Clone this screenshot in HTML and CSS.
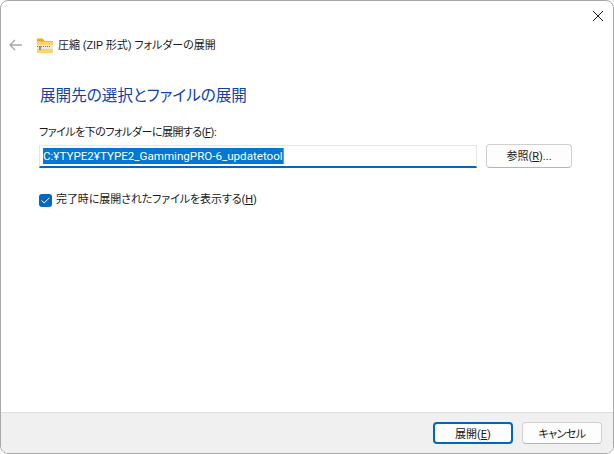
FILE: index.html
```html
<!DOCTYPE html>
<html lang="ja">
<head>
    <meta charset="UTF-8">
    <meta name="viewport" content="width=device-width, initial-scale=1.0">
    <title>圧縮 (ZIP 形式) フォルダーの展開</title>
    <link rel="stylesheet" href="styles.css">
</head>
<body>
    <div class="window">
        <div class="title-bar">
            <svg class="close-icon" width="10" height="10" viewBox="0 0 10 10">
                <path d="M0 0L10 10M10 0L0 10" stroke="#1a1a1a" stroke-width="1" fill="none"/>
            </svg>
        </div>
        <div class="nav-row">
            <svg class="back-icon" width="13" height="12" viewBox="0 0 13 12">
                <path d="M6 1L1 6L6 11M1 6H13" stroke="#a6a6a6" stroke-width="1.3" fill="none"/>
            </svg>
            <svg class="folder-icon" width="16" height="15" viewBox="0 0 16 15">
                <path d="M0 1.5a1 1 0 0 1 1-1h4.500l2 2v2H0z" fill="#f0a818"/>
                <rect x="0" y="3" width="16" height="12" rx="1" fill="#fcd46a"/>
                <rect x="0" y="3" width="16" height="1" fill="#f5bd3e"/>
                <rect x="0" y="7" width="16" height="4" fill="#ece7d6"/>
                <path d="M0 8.500H13" stroke="#77776a" stroke-width="1" stroke-dasharray="1 1"/>
                <path d="M3 8V12" stroke="#77776a" stroke-width="1.500"/>
            </svg>
            <span class="nav-title">圧縮 (ZIP 形式) フォルダーの展開</span>
        </div>
        <div class="content">
            <h1 class="heading">展開先の選択とファイルの展開</h1>
            <div class="field-label">ファイルを下のフォルダーに展開する(<u>F</u>):</div>
            <div class="field-row">
                <div class="path-input"><span class="selected">C:¥TYPE2¥TYPE2_GammingPRO-6_updatetool</span></div>
                <button class="btn browse-btn">参照(<u>R</u>)...</button>
            </div>
            <div class="check-row">
                <span class="checkbox">
                    <svg width="9" height="7" viewBox="0 0 9 7">
                        <path d="M0.500 3.500L3.200 6L8.500 0.700" stroke="#fff" stroke-width="1" fill="none"/>
                    </svg>
                </span>
                <span class="check-label">完了時に展開されたファイルを表示する(<u>H</u>)</span>
            </div>
        </div>
        <div class="footer">
            <button class="btn footer-btn primary">展開(<u>E</u>)</button>
            <button class="btn footer-btn cancel">キャンセル</button>
        </div>
    </div>
</body>
</html>
```

FILE: styles.css
```css
html, body {
    margin: 0;
    height: 100%;
    background-color: #fff;
}
body {
    font-family: Roboto, "Noto Sans CJK JP", sans-serif;
    font-size: 11px;
    font-feature-settings: "palt";
    color: #1a1a1a;
    overflow: hidden;
}
.window {
    width: 614px;
    height: 454px;
    box-sizing: border-box;
    display: flex;
    flex-direction: column;
    background: #fff;
    border: 1px solid #a9a9a9;
    border-radius: 8px;
    overflow: hidden;
}
.title-bar {
    height: 29px;
    flex: none;
    display: flex;
    justify-content: flex-end;
    align-items: flex-end;
    padding-right: 10px;
    box-sizing: border-box;
}
.close-icon {
    margin-bottom: 9px;
}
.nav-row {
    height: 30px;
    flex: none;
    display: flex;
    align-items: center;
    padding-left: 8px;
    box-sizing: border-box;
}
.folder-icon {
    margin-left: 15px;
}
.nav-title {
    margin-left: 5px;
    padding-top: 2px;
    line-height: 30px;
}
.content {
    flex: 1;
    padding: 0 0 0 38px;
}
.heading {
    margin: 24px 0 0 1px;
    font-size: 15.6px;
    font-weight: 400;
    line-height: 24px;
    color: #0f3fa8;
}
.field-label {
    margin-top: 16px;
    line-height: 18px;
    letter-spacing: -0.5px;
}
.field-row {
    display: flex;
    margin-top: 3px;
}
.path-input {
    width: 438px;
    height: 23px;
    box-sizing: border-box;
    padding: 2px 0 0 3px;
    border: 1px solid #e5e5e5;
    border-bottom: 2px solid #0067c0;
    font-size: 11.6px;
    line-height: 16px;
}
.selected {
    display: inline-block;
    height: 16px;
    background-color: #0078d4;
    color: #fff;
    white-space: nowrap;
    border-right: 1px solid #e8791a;
}
.btn {
    box-sizing: border-box;
    background: #fdfdfd;
    border: 1px solid #d0d0d0;
    border-bottom-color: #b5b5b5;
    border-radius: 4px;
    font: inherit;
    font-feature-settings: inherit;
    color: #1a1a1a;
    padding: 0;
}
.browse-btn {
    width: 86px;
    height: 24px;
    margin-left: 9px;
    margin-top: -1px;
    padding-bottom: 2px;
}
.check-row {
    display: flex;
    align-items: center;
    gap: 4px;
    margin-top: 23px;
    line-height: 18px;
}
.check-label {
    letter-spacing: -0.08px;
}
.checkbox {
    width: 13px;
    height: 13px;
    display: flex;
    align-items: center;
    justify-content: center;
    background-color: #0067c0;
    border-radius: 3px;
}
.footer {
    height: 41px;
    flex: none;
    box-sizing: border-box;
    display: flex;
    justify-content: flex-end;
    gap: 9px;
    padding: 9px 11px 0 0;
    background-color: #f0f0f0;
    border-top: 1px solid #dfdfdf;
}
.footer-btn {
    width: 80px;
    height: 22px;
}
.cancel {
    letter-spacing: -0.5px;
}
.primary {
    border: 2px solid #0067c0;
}
```
